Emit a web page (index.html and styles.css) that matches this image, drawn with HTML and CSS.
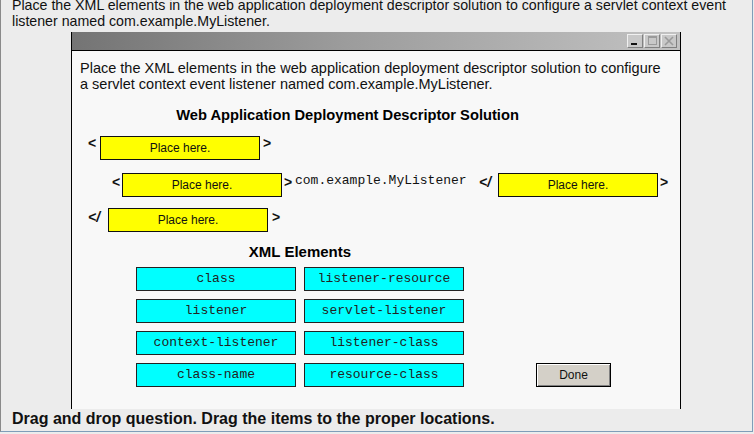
FILE: index.html
```html
<!DOCTYPE html>
<html>
<head>
<meta charset="utf-8">
<link rel="stylesheet" href="styles.css">
</head>
<body>
<div class="page">
  <div class="question">Place the XML elements in the web application deployment descriptor solution to configure a servlet context event listener named com.example.MyListener.</div>
  <div class="window">
    <div class="titlebar">
      <div class="tb-buttons">
        <span class="tb-btn"><svg width="14" height="12" viewBox="0 0 14 12"><rect x="3" y="8" width="6" height="2" fill="#111"/></svg></span>
        <span class="tb-btn"><svg width="14" height="12" viewBox="0 0 14 12"><rect x="3.5" y="1.5" width="8" height="8" fill="none" stroke="#9a9a9a"/><line x1="3" y1="2" x2="12" y2="2" stroke="#9a9a9a" stroke-width="2"/></svg></span>
        <span class="tb-btn"><svg width="14" height="12" viewBox="0 0 14 12"><path d="M3 2 L11 10 M11 2 L3 10" stroke="#9a9a9a" stroke-width="1.6"/></svg></span>
      </div>
    </div>
    <div class="content">
      <p class="intro">Place the XML elements in the web application deployment descriptor solution to configure a servlet context event listener named com.example.MyListener.</p>
      <h2 class="heading">Web Application Deployment Descriptor Solution</h2>
      <div class="row row1">
        <span class="br lt">&lt;</span><span class="slot">Place here.</span><span class="br gt">&gt;</span>
      </div>
      <div class="row row2">
        <span class="br lt2">&lt;</span><span class="slot">Place here.</span><span class="br gt2">&gt;</span><span class="mono">com.example.MyListener</span><span class="br close2">&lt;/</span><span class="slot">Place here.</span><span class="br gt3">&gt;</span>
      </div>
      <div class="row row3">
        <span class="br close">&lt;/</span><span class="slot">Place here.</span><span class="br gt4">&gt;</span>
      </div>
      <div class="lower">
        <div class="elements">
          <h2 class="subheading">XML Elements</h2>
          <div class="grid">
            <span class="item">class</span>
            <span class="item">listener-resource</span>
            <span class="item">listener</span>
            <span class="item">servlet-listener</span>
            <span class="item">context-listener</span>
            <span class="item">listener-class</span>
            <span class="item">class-name</span>
            <span class="item">resource-class</span>
          </div>
        </div>
        <button class="done">Done</button>
      </div>
    </div>
  </div>
  <div class="footer">Drag and drop question. Drag the items to the proper locations.</div>
</div>
</body>
</html>
```
FILE: styles.css
```css
html, body {
  margin: 0;
  padding: 0;
  background: #ececec;
  overflow: hidden;
}
.page {
  box-sizing: border-box;
  width: 753px;
  height: 432px;
  border-left: 1px solid #8a8a8a;
  border-right: 1px solid #7f9db9;
  border-bottom: 1px solid #7f9db9;
  background: #ececec;
  display: flex;
  flex-direction: column;
  overflow: hidden;
  font-family: "Liberation Sans", Arial, sans-serif;
  color: #000;
}
.question {
  margin-top: -3px;
  padding-left: 11px;
  padding-right: 12px;
  font-size: 14.2px;
  line-height: 16px;
  color: #111;
}
.window {
  margin-top: 3px;
  margin-left: 70px;
  width: 610px;
  box-sizing: border-box;
  flex: 1;
  min-height: 0;
  border-left: 1px solid #000;
  border-right: 1px solid #000;
  background: #f8f8f8;
  display: flex;
  flex-direction: column;
  overflow: hidden;
}
.titlebar {
  height: 18px;
  border-bottom: 1px solid #000;
  background: linear-gradient(to right, #747474 0%, #9c9c9c 45%, #c2c2c2 100%);
  display: flex;
  justify-content: flex-end;
  align-items: center;
  padding-right: 3px;
}
.tb-buttons {
  display: flex;
  gap: 1px;
}
.tb-btn {
  width: 16px;
  height: 14px;
  box-sizing: border-box;
  background: #c8c8c8;
  border: 1px solid;
  border-color: #f0f0f0 #808080 #808080 #f0f0f0;
  display: flex;
  align-items: center;
  justify-content: center;
}
.tb-btn svg { display: block; }
.content {
  padding: 9px 0 0 8px;
}
.intro {
  margin: 0;
  font-size: 14.5px;
  line-height: 16px;
  color: #111;
  width: 588px;
}
.heading {
  margin: 15px 0 0 -8px;
  font-size: 14.7px;
  line-height: 16px;
  font-weight: bold;
  text-align: center;
  width: 551px;
}
.row {
  display: flex;
  align-items: center;
  height: 24px;
  margin-left: -8px;
}
.row1 { margin-top: 13px; }
.row2 { margin-top: 13px; }
.row3 { margin-top: 11px; }
.br {
  font-weight: bold;
  font-size: 14px;
  line-height: 16px;
  color: #111;
  display: inline-block;
  margin-bottom: 6px;
}
.lt { margin-left: 16px; width: 12px; margin-bottom: 10px; }
.gt { margin-left: 3px; margin-bottom: 10px; }
.lt2 { margin-left: 40px; width: 10px; }
.gt2 { margin-left: 2px; width: 8px; }
.gt3 { margin-left: 2px; }
.close2 { margin-left: 9px; width: 19px; font-style: italic; }
.close { margin-left: 16px; width: 20px; font-style: italic; }
.gt4 { margin-left: 4px; }
.mono {
  margin-left: 3px;
  width: 175px;
  font-family: "Liberation Mono", "Courier New", monospace;
  font-size: 13px;
  line-height: 16px;
  color: #111;
  margin-bottom: 9px;
}
.slot {
  box-sizing: border-box;
  width: 160px;
  height: 24px;
  background: #ffff00;
  border: 1px solid #111;
  font-size: 12px;
  line-height: 22px;
  text-align: center;
  color: #111;
}
.lower {
  display: flex;
  margin-left: 56px;
  margin-top: 12px;
}
.elements {
  width: 328px;
}
.subheading {
  margin: 0;
  font-size: 15px;
  line-height: 16px;
  font-weight: bold;
  text-align: center;
}
.grid {
  margin-top: 7px;
  display: grid;
  grid-template-columns: 160px 160px;
  column-gap: 8px;
  row-gap: 8px;
}
.item {
  box-sizing: border-box;
  height: 24px;
  background: #00ffff;
  border: 1px solid #222;
  font-family: "Liberation Mono", "Courier New", monospace;
  font-size: 13px;
  line-height: 22px;
  text-align: center;
  color: #222;
}
.done {
  align-self: flex-end;
  margin-left: 72px;
  width: 75px;
  height: 24px;
  box-sizing: border-box;
  background: #d4d0c8;
  border: 1px solid #000;
  box-shadow: inset 1px 1px 0 #ffffff, inset -1px -1px 0 #808080;
  font-family: "Liberation Sans", Arial, sans-serif;
  font-size: 12px;
  color: #111;
  padding: 0;
}
.footer {
  height: 22px;
  box-sizing: border-box;
  padding-left: 11px;
  padding-top: 1px;
  font-size: 16px;
  line-height: 18px;
  font-weight: bold;
  color: #111;
}
```
